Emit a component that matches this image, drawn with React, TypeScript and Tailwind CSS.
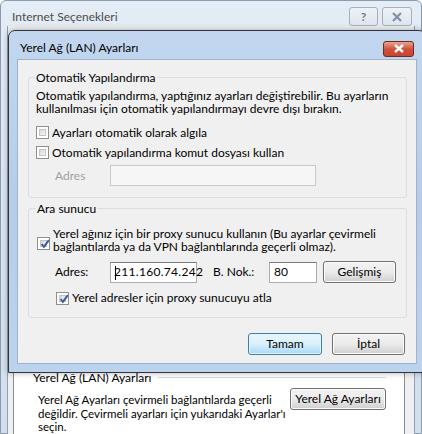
import React from "react";

const font = { fontFamily: 'Lato, "Noto Sans", sans-serif' };

function Check({ checked }: { checked?: boolean }) {
  return (
    <div className="w-[13px] h-[13px] shrink-0 border border-[#8e8f8f] bg-white p-[2px]">
      <div className="w-full h-full border border-[#c4c4c4] bg-gradient-to-br from-[#d7d7d7] to-[#f6f6f6] relative">
        {checked && (
          <svg viewBox="0 0 9 9" className="absolute -left-[1px] -top-[2px] w-[10px] h-[10px]">
            <path d="M1.5 4.5 L3.5 7 L8 1" stroke="#3b5f9e" strokeWidth="1.8" fill="none" />
          </svg>
        )}
      </div>
    </div>
  );
}

function Btn({ children, w, def }: { children: React.ReactNode; w: string; def?: boolean }) {
  return (
    <div
      className={
        "h-[22px] shrink-0 rounded-[3px] border flex items-center justify-center text-[12px] text-black whitespace-nowrap " +
        w +
        (def
          ? " border-[#3c7fb1] bg-gradient-to-b from-[#eaf6fd] via-[#d9f0fc] to-[#a7d9f5] shadow-[inset_0_0_0_1px_#e4f4fc]"
          : " border-[#707070] bg-gradient-to-b from-[#f2f2f2] via-[#ebebeb] to-[#cfcfcf] shadow-[inset_0_0_0_1px_#fcfcfc]")
      }
    >
      {children}
    </div>
  );
}

export default function App() {
  return (
    <div className="w-[422px] h-[434px] relative overflow-hidden bg-white whitespace-nowrap" style={font}>
      {/* Outer window */}
      <div className="absolute inset-0 rounded-t-[6px] border border-[#8a9bb0] bg-gradient-to-b from-[#e4ecf5] to-[#d2deeb] flex flex-col">
        <div className="h-[29px] flex items-center justify-between pl-[11px] pr-[9px]">
          <span className="text-[12px] text-[#4c4c4c] pt-[6px]">Internet Seçenekleri</span>
          <div className="flex gap-[4px] pt-[6px]">
            <div className="w-[29px] h-[19px] rounded-[3px] border border-[#a3afbf] bg-gradient-to-b from-[#eef2f7] to-[#dfe6ee] flex items-center justify-center text-[12px] text-[#6d7b8c] font-bold">?</div>
            <div className="w-[30px] h-[19px] rounded-[3px] border border-[#a3afbf] bg-gradient-to-b from-[#eef2f7] to-[#dfe6ee] flex items-center justify-center">
              <svg viewBox="0 0 12 10" className="w-[12px] h-[10px]">
                <path d="M2 1 L10 9 M10 1 L2 9" stroke="#8090a4" strokeWidth="2.2" />
              </svg>
            </div>
          </div>
        </div>
        <div className="flex-1 mx-[6px] border-l border-r border-[#8da0b8] bg-[#f0f0f0] flex flex-col pl-[5px] pr-[9px]">
          <div className="h-[343px]" />
          <div className="flex-1 bg-white border-l border-r border-[#898c95] pl-[19px] pr-[18px] pt-[1px]">
            <div className="flex items-center gap-[6px] text-[12px] text-black leading-[15px]">
              <span>Yerel Ağ (LAN) Ayarları</span>
              <div className="flex-1 h-px bg-[#d5dfe5]" />
            </div>
            <div className="flex justify-between mt-[3px]">
              <p className="text-[11.5px] leading-[13.5px] text-black pl-[5px] pt-[5px]">
                Yerel Ağ Ayarları çevirmeli bağlantılarda geçerli
                <br />
                değildir. Çevirmeli ayarları için yukarıdaki Ayarlar'ı
                <br />
                seçin.
              </p>
              <Btn w="w-[96px]">Yerel Ağ Ayarları</Btn>
            </div>
          </div>
        </div>
      </div>

      {/* Dialog */}
      <div className="absolute left-[8px] top-[30px] w-[418px] h-[343px] rounded-t-[7px] border border-[#2f3440] bg-gradient-to-b from-[#c2d7ef] via-[#b5cde9] to-[#bcd3ee] flex flex-col shadow-[0_0_6px_rgba(0,0,0,0.3)]">
        <div className="h-[28px] flex items-center justify-between pl-[11px] pr-[11px]">
          <span className="text-[12px] text-black pt-[6px]">Yerel Ağ (LAN) Ayarları</span>
          <div className="w-[31px] h-[16px] mt-[7px] rounded-[3px] border border-[#6d2a21] bg-gradient-to-b from-[#e8a493] via-[#d0503a] to-[#c7442e] flex items-center justify-center">
            <svg viewBox="0 0 12 9" className="w-[12px] h-[9px]">
              <path d="M2 1 L10 8 M10 1 L2 8" stroke="#ffffff" strokeWidth="2.4" />
            </svg>
          </div>
        </div>
        <div className="mx-[8px] h-[305px] bg-[#f0f0f0] border border-[#9fb3cc] text-[12px] text-black flex flex-col pl-[10px] pr-[9px] pt-[10px]">
          {/* Group 1 */}
          <fieldset className="border border-[#d5dfe5] rounded-[3px] h-[128px] pl-[7px] pr-[8px]">
            <legend className="px-[1px] ml-[-1px] leading-[15px]">Otomatik Yapılandırma</legend>
            <p className="leading-[13px] mt-[4px]">
              Otomatik yapılandırma, yaptığınız ayarları değiştirebilir. Bu ayarların
              <br />
              kullanılması için otomatik yapılandırmayı devre dışı bırakın.
            </p>
            <div className="flex items-center gap-[3px] mt-[10px] h-[15px]">
              <Check />
              <span>Ayarları otomatik olarak algıla</span>
            </div>
            <div className="flex items-center gap-[3px] mt-[5px] h-[15px]">
              <Check />
              <span>Otomatik yapılandırma komut dosyası kullan</span>
            </div>
            <div className="flex items-center mt-[5px]">
              <span className="w-[74px] pl-[19px] text-[#a0a0a0]">Adres</span>
              <div className="w-[206px] h-[21px] border border-[#c9c9c9] bg-[#f6f6f6]" />
            </div>
          </fieldset>

          {/* Group 2 */}
          <fieldset className="mt-[3px] border border-[#d5dfe5] rounded-[3px] h-[117px] pl-[8px] pr-[8px]">
            <legend className="px-[1px] ml-[-1px] leading-[15px]">Ara sunucu</legend>
            <div className="flex items-center gap-[3px] mt-[11px]">
              <div className="pt-[6px]">
                <Check checked />
              </div>
              <span className="leading-[13px]">
                Yerel ağınız için bir proxy sunucu kullanın (Bu ayarlar çevirmeli
                <br />
                bağlantılarda ya da VPN bağlantılarında geçerli olmaz).
              </span>
            </div>
            <div className="flex items-center mt-[8px]">
              <span className="w-[73px] pl-[18px]">Adres:</span>
              <div className="w-[87px] h-[21px] border border-[#abadb3] border-t-[#7a7a7a] bg-white flex items-center pl-[3px] relative">
                <div className="absolute left-[4px] top-[3px] w-px h-[14px] bg-black" />
                <span className="tracking-[0.3px]">211.160.74.242</span>
              </div>
              <span className="ml-[16px] w-[56px]">B. Nok.:</span>
              <div className="w-[48px] h-[21px] border border-[#abadb3] border-t-[#7a7a7a] bg-white flex items-center pl-[4px]">80</div>
              <div className="ml-[6px]">
                <Btn w="w-[73px]">Gelişmiş</Btn>
              </div>
            </div>
            <div className="flex items-center gap-[3px] mt-[8px] pl-[19px] h-[14px]">
              <Check checked />
              <span>Yerel adresler için proxy sunucuyu atla</span>
            </div>
          </fieldset>

          <div className="flex justify-end gap-[10px] mt-[15px] pr-[2px]">
            <Btn w="w-[74px]" def>Tamam</Btn>
            <Btn w="w-[73px]">İptal</Btn>
          </div>
        </div>
      </div>
    </div>
  );
}
